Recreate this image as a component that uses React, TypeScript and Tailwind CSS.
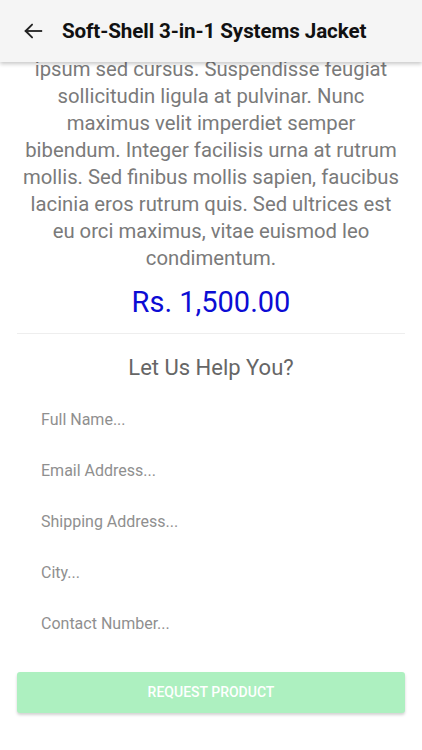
import React from 'react';

const DESC = [
  'ipsum sed cursus. Suspendisse feugiat',
  'sollicitudin ligula at pulvinar. Nunc',
  'maximus velit imperdiet semper',
  'bibendum. Integer facilisis urna at rutrum',
  'mollis. Sed finibus mollis sapien, faucibus',
  'lacinia eros rutrum quis. Sed ultrices est',
  'eu orci maximus, vitae euismod leo',
  'condimentum.',
];

const FIELDS = ['Full Name...', 'Email Address...', 'Shipping Address...', 'City...', 'Contact Number...'];

export default function App() {
  return (
    <div className="relative w-[422px] h-[750px] overflow-hidden bg-white" style={{ fontFamily: 'Roboto, "Noto Sans", sans-serif' }}>
      {/* App bar */}
      <header className="absolute top-0 left-0 right-0 z-10 h-[62px] bg-[#f5f5f5] flex items-center shadow-[0_2px_4px_rgba(0,0,0,0.22)]">
        <svg className="ml-[22px]" width="22" height="22" viewBox="0 0 24 24" fill="none" stroke="#222" strokeWidth="2" strokeLinecap="square">
          <path d="M21 12H4" />
          <path d="M11 5l-7 7 7 7" strokeLinecap="round" strokeLinejoin="round" />
        </svg>
        <h1 className="ml-[18px] text-[20.6px] font-bold text-[#111] tracking-[-0.1px]">Soft-Shell 3-in-1 Systems Jacket</h1>
      </header>

      <div className="pt-[56px] px-[17px]">
        <p className="text-center text-[20.3px] leading-[27px] text-[#7a7a7a]">
          {DESC.map((l) => (
            <span key={l} className="block">{l}</span>
          ))}
        </p>
        <p className="text-center text-[29px] leading-[40px] text-[#0c0cd4] mt-[10px]">Rs. 1,500.00</p>
        <div className="h-px bg-[#eeeeee] mt-[11px]" />

        <h2 className="text-center text-[22px] leading-[30px] text-[#666] mt-[19px]">Let Us Help You?</h2>

        <div className="mt-[11px] flex flex-col">
          {FIELDS.map((f) => (
            <input
              key={f}
              placeholder={f}
              className="h-[51px] px-[24px] text-[16px] bg-transparent outline-none placeholder:text-[#8f8f8f]"
            />
          ))}
        </div>

        <button className="mt-[23px] w-full h-[41px] rounded-[3px] bg-[#adf0c0] text-white text-[14px] font-medium shadow-[0_2px_3px_rgba(0,0,0,0.18)]">
          REQUEST PRODUCT
        </button>
      </div>
    </div>
  );
}
